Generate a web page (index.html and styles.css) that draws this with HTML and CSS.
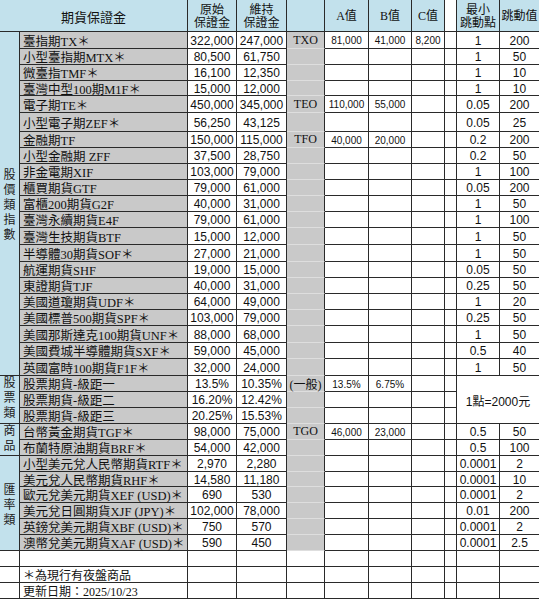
FILE: index.html
```html
<!DOCTYPE html>
<html lang="zh-Hant">
<head>
<meta charset="utf-8">
<title>期貨保證金</title>
<link rel="stylesheet" href="styles.css">
</head>
<body>
<div class="g">
  <div class="c h hname">期貨保證金</div>
  <div class="c h hd">原始<br>保證金</div>
  <div class="c h hd">維持<br>保證金</div>
  <div class="c h"></div>
  <div class="c h hd">A值</div>
  <div class="c h hd">B值</div>
  <div class="c h hd">C值</div>
  <div class="c"></div>
  <div class="c h hd">最小<br>跳動點</div>
  <div class="c h hd e">跳動值</div>

  <div class="c cat s21"><span>股價類指數</span></div>
  <div class="c nm">臺指期TX＊</div><div class="c n">322,000</div><div class="c n">247,000</div><div class="c cd">TXO</div><div class="c ab">81,000</div><div class="c ab">41,000</div><div class="c ab">8,200</div><div class="c"></div><div class="c n">1</div><div class="c n e">200</div>
  <div class="c nm">小型臺指期MTX＊</div><div class="c n">80,500</div><div class="c n">61,750</div><div class="c cd"></div><div class="c ab"></div><div class="c ab"></div><div class="c ab"></div><div class="c"></div><div class="c n">1</div><div class="c n e">50</div>
  <div class="c nm">微臺指TMF＊</div><div class="c n">16,100</div><div class="c n">12,350</div><div class="c cd"></div><div class="c ab"></div><div class="c ab"></div><div class="c ab"></div><div class="c"></div><div class="c n">1</div><div class="c n e">10</div>
  <div class="c nm">臺灣中型100期M1F＊</div><div class="c n">15,000</div><div class="c n">12,000</div><div class="c cd"></div><div class="c ab"></div><div class="c ab"></div><div class="c ab"></div><div class="c"></div><div class="c n">1</div><div class="c n e">10</div>
  <div class="c nm">電子期TE＊</div><div class="c n">450,000</div><div class="c n">345,000</div><div class="c cd">TEO</div><div class="c ab">110,000</div><div class="c ab">55,000</div><div class="c ab"></div><div class="c"></div><div class="c n">0.05</div><div class="c n e">200</div>
  <div class="c nm">小型電子期ZEF＊</div><div class="c n">56,250</div><div class="c n">43,125</div><div class="c cd"></div><div class="c ab"></div><div class="c ab"></div><div class="c ab"></div><div class="c"></div><div class="c n">0.05</div><div class="c n e">25</div>
  <div class="c nm">金融期TF</div><div class="c n">150,000</div><div class="c n">115,000</div><div class="c cd">TFO</div><div class="c ab">40,000</div><div class="c ab">20,000</div><div class="c ab"></div><div class="c"></div><div class="c n">0.2</div><div class="c n e">200</div>
  <div class="c nm">小型金融期 ZFF</div><div class="c n">37,500</div><div class="c n">28,750</div><div class="c cd"></div><div class="c ab"></div><div class="c ab"></div><div class="c ab"></div><div class="c"></div><div class="c n">0.2</div><div class="c n e">50</div>
  <div class="c nm">非金電期XIF</div><div class="c n">103,000</div><div class="c n">79,000</div><div class="c cd"></div><div class="c ab"></div><div class="c ab"></div><div class="c ab"></div><div class="c"></div><div class="c n">1</div><div class="c n e">100</div>
  <div class="c nm">櫃買期貨GTF</div><div class="c n">79,000</div><div class="c n">61,000</div><div class="c cd"></div><div class="c ab"></div><div class="c ab"></div><div class="c ab"></div><div class="c"></div><div class="c n">0.05</div><div class="c n e">200</div>
  <div class="c nm">富櫃200期貨G2F</div><div class="c n">40,000</div><div class="c n">31,000</div><div class="c cd"></div><div class="c ab"></div><div class="c ab"></div><div class="c ab"></div><div class="c"></div><div class="c n">1</div><div class="c n e">50</div>
  <div class="c nm">臺灣永續期貨E4F</div><div class="c n">79,000</div><div class="c n">61,000</div><div class="c cd"></div><div class="c ab"></div><div class="c ab"></div><div class="c ab"></div><div class="c"></div><div class="c n">1</div><div class="c n e">100</div>
  <div class="c nm">臺灣生技期貨BTF</div><div class="c n">15,000</div><div class="c n">12,000</div><div class="c cd"></div><div class="c ab"></div><div class="c ab"></div><div class="c ab"></div><div class="c"></div><div class="c n">1</div><div class="c n e">50</div>
  <div class="c nm">半導體30期貨SOF＊</div><div class="c n">27,000</div><div class="c n">21,000</div><div class="c cd"></div><div class="c ab"></div><div class="c ab"></div><div class="c ab"></div><div class="c"></div><div class="c n">1</div><div class="c n e">50</div>
  <div class="c nm">航運期貨SHF</div><div class="c n">19,000</div><div class="c n">15,000</div><div class="c cd"></div><div class="c ab"></div><div class="c ab"></div><div class="c ab"></div><div class="c"></div><div class="c n">0.05</div><div class="c n e">50</div>
  <div class="c nm">東證期貨TJF</div><div class="c n">40,000</div><div class="c n">31,000</div><div class="c cd"></div><div class="c ab"></div><div class="c ab"></div><div class="c ab"></div><div class="c"></div><div class="c n">0.25</div><div class="c n e">50</div>
  <div class="c nm">美國道瓊期貨UDF＊</div><div class="c n">64,000</div><div class="c n">49,000</div><div class="c cd"></div><div class="c ab"></div><div class="c ab"></div><div class="c ab"></div><div class="c"></div><div class="c n">1</div><div class="c n e">20</div>
  <div class="c nm">美國標普500期貨SPF＊</div><div class="c n">103,000</div><div class="c n">79,000</div><div class="c cd"></div><div class="c ab"></div><div class="c ab"></div><div class="c ab"></div><div class="c"></div><div class="c n">0.25</div><div class="c n e">50</div>
  <div class="c nm">美國那斯達克100期貨UNF＊</div><div class="c n">88,000</div><div class="c n">68,000</div><div class="c cd"></div><div class="c ab"></div><div class="c ab"></div><div class="c ab"></div><div class="c"></div><div class="c n">1</div><div class="c n e">50</div>
  <div class="c nm">美國費城半導體期貨SXF＊</div><div class="c n">59,000</div><div class="c n">45,000</div><div class="c cd"></div><div class="c ab"></div><div class="c ab"></div><div class="c ab"></div><div class="c"></div><div class="c n">0.5</div><div class="c n e">40</div>
  <div class="c nm">英國富時100期貨F1F＊</div><div class="c n">32,000</div><div class="c n">24,000</div><div class="c cd"></div><div class="c ab"></div><div class="c ab"></div><div class="c ab"></div><div class="c"></div><div class="c n">1</div><div class="c n e">50</div>

  <div class="c cat s3 up"><span>股票類</span></div>
  <div class="c nm">股票期貨-級距一</div><div class="c n">13.5%</div><div class="c n">10.35%</div><div class="c cd">(一般)</div><div class="c ab">13.5%</div><div class="c ab">6.75%</div><div class="c ab"></div><div class="c"></div><div class="c n e pt">1點=2000元</div>
  <div class="c nm">股票期貨-級距二</div><div class="c n">16.20%</div><div class="c n">12.42%</div><div class="c cd"></div><div class="c ab"></div><div class="c ab"></div><div class="c ab"></div><div class="c"></div>
  <div class="c nm">股票期貨-級距三</div><div class="c n">20.25%</div><div class="c n">15.53%</div><div class="c cd"></div><div class="c ab"></div><div class="c ab"></div><div class="c ab"></div><div class="c"></div>

  <div class="c cat s2 up"><span>商品</span></div>
  <div class="c nm">台幣黃金期貨TGF＊</div><div class="c n">98,000</div><div class="c n">75,000</div><div class="c cd">TGO</div><div class="c ab">46,000</div><div class="c ab">23,000</div><div class="c ab"></div><div class="c"></div><div class="c n">0.5</div><div class="c n e">50</div>
  <div class="c nm">布蘭特原油期貨BRF＊</div><div class="c n">54,000</div><div class="c n">42,000</div><div class="c cd"></div><div class="c ab"></div><div class="c ab"></div><div class="c ab"></div><div class="c"></div><div class="c n">0.5</div><div class="c n e">100</div>

  <div class="c cat s6"><span>匯率類</span></div>
  <div class="c nm">小型美元兌人民幣期貨RTF＊</div><div class="c n">2,970</div><div class="c n">2,280</div><div class="c cd"></div><div class="c ab"></div><div class="c ab"></div><div class="c ab"></div><div class="c"></div><div class="c n">0.0001</div><div class="c n e">2</div>
  <div class="c nm">美元兌人民幣期貨RHF＊</div><div class="c n">14,580</div><div class="c n">11,180</div><div class="c cd"></div><div class="c ab"></div><div class="c ab"></div><div class="c ab"></div><div class="c"></div><div class="c n">0.0001</div><div class="c n e">10</div>
  <div class="c nm">歐元兌美元期貨XEF (USD)＊</div><div class="c n">690</div><div class="c n">530</div><div class="c cd"></div><div class="c ab"></div><div class="c ab"></div><div class="c ab"></div><div class="c"></div><div class="c n">0.0001</div><div class="c n e">2</div>
  <div class="c nm">美元兌日圓期貨XJF (JPY)＊</div><div class="c n">102,000</div><div class="c n">78,000</div><div class="c cd"></div><div class="c ab"></div><div class="c ab"></div><div class="c ab"></div><div class="c"></div><div class="c n">0.01</div><div class="c n e">200</div>
  <div class="c nm">英鎊兌美元期貨XBF (USD)＊</div><div class="c n">750</div><div class="c n">570</div><div class="c cd"></div><div class="c ab"></div><div class="c ab"></div><div class="c ab"></div><div class="c"></div><div class="c n">0.0001</div><div class="c n e">2</div>
  <div class="c nm">澳幣兌美元期貨XAF (USD)＊</div><div class="c n">590</div><div class="c n">450</div><div class="c cd"></div><div class="c ab"></div><div class="c ab"></div><div class="c ab"></div><div class="c"></div><div class="c n">0.0001</div><div class="c n e">2.5</div>

  <div class="c"></div><div class="c nm w"></div><div class="c"></div><div class="c"></div><div class="c"></div><div class="c"></div><div class="c"></div><div class="c"></div><div class="c"></div><div class="c"></div><div class="c e"></div>
  <div class="c"></div><div class="c nm w">＊為現行有夜盤商品</div><div class="c"></div><div class="c"></div><div class="c"></div><div class="c"></div><div class="c"></div><div class="c"></div><div class="c"></div><div class="c"></div><div class="c e"></div>
  <div class="c"></div><div class="c nm w">更新日期：2025/10/23</div><div class="c"></div><div class="c"></div><div class="c"></div><div class="c"></div><div class="c"></div><div class="c"></div><div class="c"></div><div class="c"></div><div class="c e"></div>
</div>
</body>
</html>
```
FILE: styles.css
```css
html, body {
  margin: 0;
  padding: 0;
  background: #ffffff;
}

.g {
  display: grid;
  width: 539px;
  grid-template-columns: 20px 168px 49px 50px 38px 44px 43px 33px 12px 43px 39px;
  grid-template-rows: 32px 17px 16px 16px 15px 17px 19px 16px 16px 16px 16px 16px 16px 17px 17px 16px 16px 16px 16px 17px 16px 17px 16px 16px 16px 16px 16px 16px 15px 16px 16px 16px 16px 16px 16px 16px;
  color: #111;
}

.c {
  box-sizing: border-box;
  border-right: 1px solid #2a2a2a;
  border-bottom: 1px solid #2a2a2a;
  display: flex;
  align-items: center;
  justify-content: center;
  white-space: nowrap;
  overflow: visible;
  min-width: 0;
}

.e {
  border-right: none;
}

.h {
  background: #c2e1ec;
}

.hname {
  grid-column: span 2;
  font: 13px "Noto Sans CJK TC", sans-serif;
  padding-top: 1px;
}

.hd {
  font: 12px/13px "Liberation Serif", "Noto Sans CJK TC", serif;
  text-align: center;
  padding-top: 2px;
}

.cat {
  background: #c2e1ec;
  font: 12px/15px "Noto Sans CJK TC", sans-serif;
  color: #222;
}

.cat span {
  display: block;
  width: 12px;
  white-space: normal;
  word-break: break-all;
}

.up {
  padding-bottom: 6px;
}

.s21 { grid-row: span 21; }
.s6 { grid-row: span 6; }
.s3 { grid-row: span 3; }
.s2 { grid-row: span 2; }

.nm {
  background: #c9c9c9;
  justify-content: flex-start;
  padding-left: 3px;
  font: 12.5px "Liberation Serif", "Noto Sans CJK TC", serif;
  z-index: 1;
}

.nm.w {
  background: #ffffff;
  font-size: 12px;
}

.n {
  font: 12px "Liberation Sans", "Noto Sans CJK TC", sans-serif;
  padding-top: 1px;
}

.pt {
  grid-column: span 2;
  grid-row: span 3;
}

.cd {
  background: #c9c9c9;
  border-bottom-color: #dedede;
  font: 12px "Liberation Serif", "Noto Sans CJK TC", serif;
}

.ab {
  font: 10px "Liberation Sans", sans-serif;
  padding-top: 1px;
}
```
